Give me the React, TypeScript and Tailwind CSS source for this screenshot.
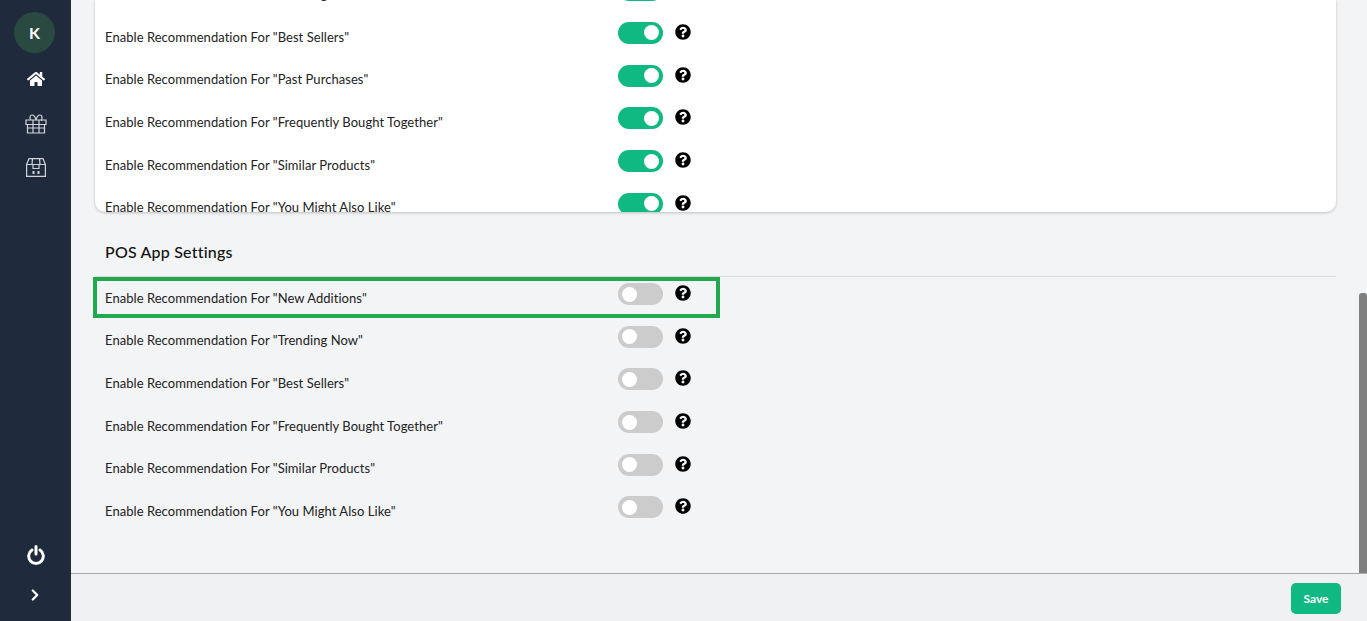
import { FaHome, FaQuestionCircle } from 'react-icons/fa';
import { ChevronRight } from 'lucide-react';

const webLabels = ['Trending Now', 'Best Sellers', 'Past Purchases', 'Frequently Bought Together', 'Similar Products', 'You Might Also Like'];
const posLabels = ['New Additions', 'Trending Now', 'Best Sellers', 'Frequently Bought Together', 'Similar Products', 'You Might Also Like'];

function GiftIcon() {
    return (
        <svg width="22" height="20" viewBox="0 0 22 20" fill="none" stroke="#d1d5db" strokeWidth="1.2">
            <path d="M1 6h20v4.500H1zM2.500 10.500V19h17v-8.500M8 6v13M14 6v13M2.500 14h17" />
            <path d="M11 6C10 2 9 1 7 1 5 1 4.500 3 5.500 6M11 6c1-4 2-5 4-5 2 0 2.500 2 1.500 6" />
        </svg>
    );
}

function StoreIcon() {
    return (
        <svg width="20" height="19" viewBox="0 0 20 19" fill="none" stroke="#d1d5db" strokeWidth="1.2">
            <path d="M.6 6.500L3 .6h14l2.400 5.900zM.6 6.500v11.900h18.800V6.500M6.500.6L6 6.500M13.500.6l.5 5.900M7 6.500V10.500h6V6.500" />
            <path d="M7.500 13v3M12.500 13v3" strokeWidth="2" />
        </svg>
    );
}

function PowerIcon() {
    return (
        <svg width="18" height="20" viewBox="0 0 18 20" fill="none" stroke="white" strokeWidth="3" strokeLinecap="round">
            <path d="M5 5a7.300 7.300 0 1 0 8 0M9 1.500V9" />
        </svg>
    );
}

function Toggle({ on }: { on: boolean }) {
    return (
        <div className={`w-[45px] h-[22px] rounded-full flex items-center px-[4px] ${on ? 'bg-[#10b981] justify-end' : 'bg-[#cccccc] justify-start'}`}>
            <div className="w-[15px] h-[15px] rounded-full bg-white" />
        </div>
    );
}

function Row({ label, on }: { label: string; on: boolean }) {
    return (
        <div className="h-[42.7px] shrink-0 flex items-start">
            <span className="w-[513px] pt-[7.7px] text-[13px] leading-[20px] text-[#222222] tracking-[0.05px]">
                Enable Recommendation For "{label}"
            </span>
            <div className="pt-[3px] flex items-start gap-[12px]">
                <Toggle on={on} />
                <FaQuestionCircle className="text-black mt-[2px]" size={16} />
            </div>
        </div>
    );
}

export default function App() {
    return (
        <main className="h-[621px] w-full flex overflow-hidden bg-[#f3f4f6] font-['Lato',sans-serif]">
            <aside className="w-[71px] shrink-0 bg-[#1f2a3c] flex flex-col items-center">
                <div className="mt-[12px] mr-[2px] w-[41px] h-[41px] rounded-full bg-[#2a4a41] flex items-center justify-center text-white font-bold text-[16px]">
                    K
                </div>
                <FaHome className="mt-[17px] text-white" size={18} />
                <div className="mt-[26px]"><GiftIcon /></div>
                <div className="mt-[24px]"><StoreIcon /></div>
                <div className="mt-auto"><PowerIcon /></div>
                <ChevronRight className="mt-[21px] mb-[17px] mr-[2px] text-white" size={18} strokeWidth={3} />
            </aside>
            <div className="flex-1 flex flex-col min-w-0">
                <div className="relative flex-1 min-h-0 flex">
                    <div className="flex-1 min-w-0 pl-[24px] pr-[23px]">
                        <section className="h-[212px] bg-white rounded-b-[10px] shadow-[0_1px_3px_rgba(0,0,0,0.22)] pl-[10px] overflow-hidden flex flex-col justify-end">
                            <div className="flex flex-col mb-[-20.4px]">
                                {webLabels.map((label) => (
                                    <Row key={label} label={label} on />
                                ))}
                            </div>
                        </section>
                        <h2 className="mt-[29px] pl-[10px] h-[36px] border-b border-[#dddddd] text-[16px] leading-[22px] font-medium text-[#111111] tracking-[0.2px]">
                            POS App Settings
                        </h2>
                        <div className="pl-[10px] flex flex-col mt-[3px]">
                            {posLabels.map((label) => (
                                <Row key={label} label={label} on={false} />
                            ))}
                        </div>
                    </div>
                    <div className="w-[8px] shrink-0 pt-[293px]">
                        <div className="h-full bg-[#7f7f7f] rounded-t-[3px]" />
                    </div>
                    <div className="absolute left-[22px] top-[277px] w-[627px] h-[41px] border-[4px] border-[#22a94f]" />
                </div>
                <footer className="h-[48px] shrink-0 border-t border-[#a9a9a9] bg-[#f0f1f3] flex items-start justify-end pt-[9px] pr-[26px]">
                    <button className="w-[50px] h-[31px] rounded-[5px] bg-[#10b981] text-white text-[12px] font-bold">Save</button>
                </footer>
            </div>
        </main>
    );
}
